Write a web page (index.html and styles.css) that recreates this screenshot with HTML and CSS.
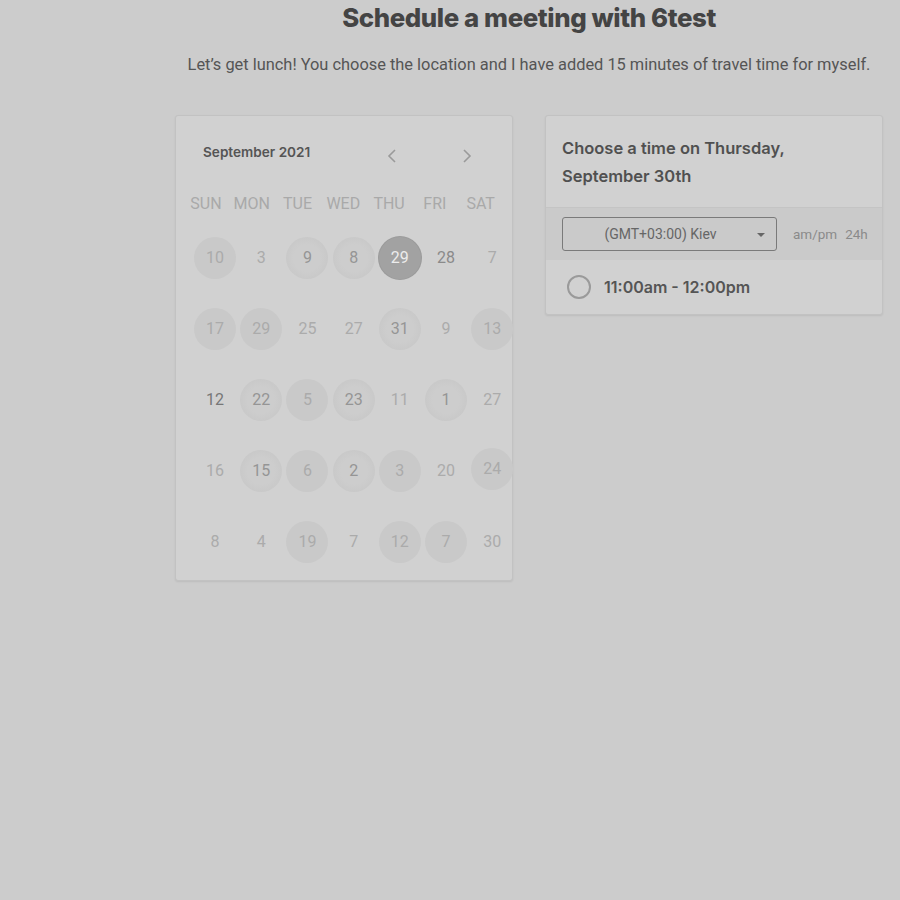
FILE: index.html
```html
<!DOCTYPE html>
<html lang="en">
<head>
<meta charset="utf-8">
<title>Schedule a meeting with 6test</title>
<link rel="stylesheet" href="styles.css">
</head>
<body>
<div class="page">
  <h1 class="title">Schedule a meeting with 6test</h1>
  <p class="subtitle">Let’s get lunch! You choose the location and I have added 15 minutes of travel time for myself.</p>
  <div class="cards">
    <section class="card calendar">
      <div class="cal-head">
        <span class="month">September 2021</span>
        <div class="nav">
          <svg class="chev" width="12" height="16" viewBox="0 0 12 16"><path d="M9 2 L3 8 L9 14" fill="none" stroke="#9a9a9a" stroke-width="1.6"/></svg>
          <svg class="chev" width="12" height="16" viewBox="0 0 12 16"><path d="M3 2 L9 8 L3 14" fill="none" stroke="#9a9a9a" stroke-width="1.6"/></svg>
        </div>
      </div>
      <div class="weekdays">
        <span>SUN</span><span>MON</span><span>TUE</span><span>WED</span><span>THU</span><span>FRI</span><span>SAT</span>
      </div>
      <div class="days">
        <span class="day c">10</span><span class="day">3</span><span class="day t">9</span><span class="day t">8</span><span class="day sel">29</span><span class="day dk">28</span><span class="day">7</span>
        <span class="day c">17</span><span class="day c">29</span><span class="day">25</span><span class="day">27</span><span class="day t">31</span><span class="day">9</span><span class="day c">13</span>
        <span class="day dk2">12</span><span class="day t">22</span><span class="day c">5</span><span class="day t">23</span><span class="day">11</span><span class="day t">1</span><span class="day">27</span>
        <span class="day">16</span><span class="day t">15</span><span class="day c">6</span><span class="day t">2</span><span class="day c">3</span><span class="day">20</span><span class="day c up">24</span>
        <span class="day">8</span><span class="day">4</span><span class="day c">19</span><span class="day">7</span><span class="day c">12</span><span class="day c">7</span><span class="day">30</span>
      </div>
    </section>
    <section class="card times">
      <div class="times-head">Choose a time on Thursday, September 30th</div>
      <div class="tz-row">
        <div class="tz-select">
          <span>(GMT+03:00) Kiev</span>
          <svg class="caret" width="8" height="4" viewBox="0 0 8 4"><path d="M0 0 H8 L4 4 Z" fill="#666"/></svg>
        </div>
        <div class="fmt"><span>am/pm</span><span>24h</span></div>
      </div>
      <div class="slot">
        <span class="radio"></span>
        <span class="slot-label">11:00am - 12:00pm</span>
      </div>
    </section>
  </div>
</div>
</body>
</html>
```

FILE: styles.css
```css
html, body {
  margin: 0;
  padding: 0;
  background: #cccccc;
}
body {
  font-family: Roboto, "Liberation Sans", sans-serif;
  height: 900px;
}
.page {
  width: 708px;
  margin-left: 175px;
  display: flex;
  flex-direction: column;
  align-items: center;
}
.title {
  font-family: Inter, "Liberation Sans", sans-serif;
  font-weight: 800;
  font-size: 25.8px;
  letter-spacing: -0.4px;
  color: #444444;
  margin: 3px 0 0;
  line-height: 30px;
  white-space: nowrap;
}
.subtitle {
  margin: 22px 0 0;
  font-size: 16.4px;
  line-height: 20px;
  color: #555555;
  white-space: nowrap;
}
.cards {
  align-self: stretch;
  display: flex;
  gap: 32px;
  align-items: flex-start;
  margin-top: 40px;
}
.card {
  background: #d1d1d1;
  border: 1px solid #c2c2c2;
  border-radius: 3px;
  box-shadow: 0 1px 2px rgba(0,0,0,0.08);
  box-sizing: border-box;
  width: 338px;
}
.calendar {
  height: 466px;
}
.cal-head {
  display: flex;
  align-items: center;
  height: 59px;
  padding: 21px 0 0 27px;
  box-sizing: border-box;
}
.month {
  font-family: Inter, "Liberation Sans", sans-serif;
  font-weight: 600;
  font-size: 13.6px;
  color: #555555;
  width: 180px;
  margin-top: -8px;
}
.nav {
  display: flex;
  gap: 63px;
  margin-left: 3px;
}
.chev {
  display: block;
}
.weekdays {
  display: grid;
  grid-template-columns: repeat(7, 45.8px);
  padding-left: 7px;
  margin-top: 18px;
  font-size: 16px;
  line-height: 22px;
  color: #a9a9a9;
}
.weekdays span {
  text-align: center;
}
.days {
  display: grid;
  grid-template-columns: repeat(7, 46.2px);
  grid-auto-rows: 71px;
  padding-left: 16px;
  margin-top: 7px;
}
.day {
  width: 42px;
  height: 42px;
  border-radius: 50%;
  justify-self: center;
  align-self: center;
  display: flex;
  align-items: center;
  justify-content: center;
  font-size: 16px;
  color: #ababab;
}
.day.c {
  background: #c9c9c9;
}
.day.up {
  transform: translateY(-2px);
}
.day.t {
  background: radial-gradient(circle, #cdcdcd 0 45%, #c9c9c9 70%, #c7c7c7 100%);
  color: #959595;
}
.day.sel {
  background: #a2a2a2;
  color: #ececec;
  box-shadow: 0 0 0 1px #9b9b9b;
}
.day.dk {
  color: #8a8a8a;
}
.day.dk2 {
  color: #777777;
}
.times-head {
  font-family: Inter, "Liberation Sans", sans-serif;
  font-weight: 600;
  font-size: 16.5px;
  line-height: 28px;
  color: #505050;
  padding: 18px 16px 17px;
  border-bottom: 1px solid #c4c4c4;
}
.tz-row {
  display: flex;
  align-items: center;
  background: #cacaca;
  height: 52px;
  padding: 0 16px;
}
.tz-select {
  flex: 0 0 215px;
  width: 215px;
  height: 34px;
  box-sizing: border-box;
  border: 1px solid #7a7a7a;
  border-radius: 3px;
  display: flex;
  align-items: center;
  justify-content: center;
  position: relative;
  font-size: 14px;
  color: #666666;
}
.tz-select span {
  margin-left: -18px;
}
.caret {
  position: absolute;
  right: 11px;
  top: 15px;
}
.fmt {
  margin-left: 16px;
  display: flex;
  gap: 8px;
  font-size: 13.5px;
  color: #8a8a8a;
  white-space: nowrap;
}
.slot {
  display: flex;
  align-items: center;
  height: 54px;
  padding-left: 21px;
}
.radio {
  width: 20px;
  height: 20px;
  border: 2px solid #9a9a9a;
  border-radius: 50%;
}
.slot-label {
  margin-left: 13px;
  font-family: Inter, "Liberation Sans", sans-serif;
  font-weight: 600;
  font-size: 16px;
  color: #555555;
}
```
